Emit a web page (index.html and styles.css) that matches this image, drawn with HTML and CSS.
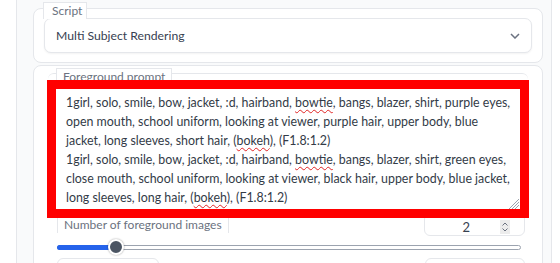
FILE: index.html
```html
<!DOCTYPE html>
<html lang="en">
<head>
  <meta charset="UTF-8">
  <title>Multi Subject Rendering</title>
  <link rel="stylesheet" href="styles.css">
</head>
<body>
  <div class="column">
    <div class="block">
      <span class="block-label">Script</span>
      <div class="dropdown">
        <span>Multi Subject Rendering</span>
        <svg class="chevron" width="10" height="6" viewBox="0 0 10 6">
          <polyline points="1,1 5,5 9,1" fill="none" stroke="#6b7280" stroke-width="1.5"/>
        </svg>
      </div>
    </div>

    <div class="block group">
      <div class="field">
        <span class="block-label">Foreground prompt</span>
        <div class="prompt">
          1girl, solo, smile, bow, jacket, :d, hairband, <span class="typo">bowtie</span>, bangs, blazer, shirt, purple eyes,<br>
          open mouth, school uniform, looking at viewer, purple hair, upper body, blue<br>
          jacket, long sleeves, short hair, (<span class="typo">bokeh</span>), (F1.8:1.2)<br>
          1girl, solo, smile, bow, jacket, :d, hairband, <span class="typo">bowtie</span>, bangs, blazer, shirt, green eyes,<br>
          close mouth, school uniform, looking at viewer, black hair, upper body, blue jacket,<br>
          long sleeves, long hair, (<span class="typo">bokeh</span>), (F1.8:1.2)
          <svg class="grip" width="11" height="11" viewBox="0 0 11 11">
            <line x1="11" y1="1" x2="1" y2="11" stroke="#9ca3af"/>
            <line x1="11" y1="4" x2="4" y2="11" stroke="#9ca3af"/>
            <line x1="11" y1="7" x2="7" y2="11" stroke="#9ca3af"/>
          </svg>
        </div>
      </div>

      <div class="number-row">
        <span class="field-label">Number of foreground images</span>
        <div class="number-input">
          <span>2</span>
          <span class="spin">
            <svg width="8" height="12" viewBox="0 0 8 12">
              <polyline points="1.5,4.5 4,2 6.5,4.5" fill="none" stroke="#6b7280" stroke-width="1"/>
              <polyline points="1.5,7.5 4,10 6.5,7.5" fill="none" stroke="#6b7280" stroke-width="1"/>
            </svg>
          </span>
        </div>
      </div>

      <div class="slider">
        <div class="slider-track"></div>
        <div class="slider-fill"></div>
        <div class="slider-thumb"></div>
      </div>

      <div class="next-row">
        <div class="stub short"></div>
        <div class="stub"></div>
      </div>
    </div>
  </div>
</body>
</html>
```

FILE: styles.css
```css
body { margin: 0; background: #fff; font-family: Lato, "Liberation Sans", sans-serif; }

.column {
  margin-left: 16px;
  width: 536px;
  height: 263px;
  box-sizing: border-box;
  border-left: 1px solid #e5e7eb;
  border-right: 1px solid #e5e7eb;
  background: #f9fafb;
  padding: 8px 8px 0 16px;
  overflow: hidden;
}

.block {
  position: relative;
  background: #fff;
  border: 1px solid #e5e7eb;
  border-radius: 8px;
  padding: 9px 10px;
}
.block.group { margin-top: 2px; padding: 7px 14px 0; }

.block-label {
  position: absolute;
  top: -7px;
  left: 9px;
  z-index: 1;
  background: #fff;
  border: 1px solid #e5e7eb;
  border-bottom: none;
  padding: 0 4px 0 8px;
  line-height: 16px;
  font-size: 12px;
  color: #6b7280;
}

.dropdown {
  display: flex;
  align-items: center;
  justify-content: space-between;
  height: 35px;
  box-sizing: border-box;
  border: 1px solid #e5e7eb;
  border-radius: 7px;
  background: #fff;
  box-shadow: 0 1px 2px rgba(0,0,0,0.05);
  padding: 0 11px 0 11px;
  color: #374151;
  font-size: 12.2px;
}

.field {
  position: relative;
  border-top: 1px solid #e5e7eb;
  border-radius: 6px 6px 0 0;
  padding-top: 6px;
}
.field .block-label { top: -6px; left: 8px; padding: 0 6px; }

.prompt {
  position: relative;
  z-index: 2;
  margin: 0 -1px;
  height: 112px;
  padding: 4px 10px;
  border: 9px solid #ff0000;
  background: #fff;
  color: #333b47;
  font-size: 12.4px;
  line-height: 19px;
  white-space: nowrap;
  overflow: hidden;
}
.typo {
  text-decoration: underline wavy #e02424;
  text-decoration-thickness: 1px;
  text-underline-offset: 2px;
  text-decoration-skip-ink: none;
}
.grip { position: absolute; right: 1px; bottom: 0; }

.number-row {
  display: flex;
  justify-content: space-between;
  align-items: flex-start;
  margin-top: -5px;
  padding: 0 3px 0 9px;
}
.field-label {
  border: 1px solid #e5e7eb;
  border-bottom: none;
  padding: 3px 6px 0;
  line-height: 16px;
  font-size: 12px;
  color: #6b7280;
}
.number-input {
  display: flex;
  align-items: center;
  justify-content: flex-end;
  gap: 30px;
  width: 101px;
  height: 23px;
  box-sizing: border-box;
  border: 1px solid #e5e7eb;
  border-radius: 6px;
  background: #fff;
  padding: 5px 14px 0 0;
  font-size: 13px;
  color: #374151;
}
.spin {
  display: flex;
  align-items: center;
  justify-content: center;
  width: 10px;
  height: 14px;
  background: #ececec;
}

.slider {
  position: relative;
  height: 20px;
  margin: 1px 7px 0 9px;
}
.slider-track {
  position: relative;
  top: 8px;
  height: 5px;
  box-sizing: border-box;
  border: 1px solid #9ca3af;
  border-radius: 3px;
  background: #fff;
}
.slider-fill {
  position: absolute;
  left: 0;
  top: 8px;
  width: 56px;
  height: 5px;
  border-radius: 3px;
  background: #2563eb;
}
.slider-thumb {
  position: absolute;
  left: 51px;
  top: 2px;
  width: 16px;
  height: 16px;
  box-sizing: border-box;
  border-radius: 50%;
  border: 2px solid #fff;
  background: #4b5563;
  box-shadow: 0 0 2px rgba(0,0,0,0.4);
}

.next-row {
  display: flex;
  justify-content: space-between;
  margin-top: 1px;
  padding: 0 3px 0 9px;
}
.stub {
  width: 98px;
  height: 20px;
  border: 1px solid #e5e7eb;
  border-radius: 6px;
  background: #fff;
}
.stub.short { width: 100px; }
```
